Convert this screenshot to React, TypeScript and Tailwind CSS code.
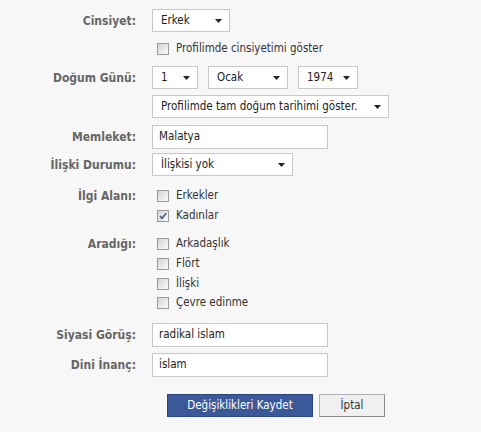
import React from "react";

function Arrow() {
  return (
    <svg width="7" height="4" viewBox="0 0 7 4" className="shrink-0">
      <polygon points="0,0 7,0 3.5,4" fill="#222" />
    </svg>
  );
}

function Select({ value, w }: { value: string; w: string }) {
  return (
    <div className={`flex h-[23px] items-center justify-between border border-[#c8c8c8] bg-white pl-[8px] pr-[7px] text-[#222] ${w}`}>
      <span>{value}</span>
      <Arrow />
    </div>
  );
}

function Input({ value }: { value: string }) {
  return (
    <div className="flex h-[24px] w-[176px] items-center border border-[#c8c8c8] bg-white px-[6px] text-[#222]">
      {value}
    </div>
  );
}

function Box({ checked }: { checked?: boolean }) {
  return (
    <span className="relative inline-block h-[12px] w-[12px] shrink-0 border border-[#9a9a9a] bg-linear-to-br from-[#d4d4d4] to-[#fbfbfb]">
      {checked && (
        <svg width="10" height="10" viewBox="0 0 10 10" className="absolute left-[0px] top-[0px]">
          <path d="M2 5 L4 7.5 L8.2 2.3" stroke="#4b5f8c" strokeWidth="1.7" fill="none" />
        </svg>
      )}
    </span>
  );
}

function Check({ label, checked, h = "h-[20px]" }: { label: string; checked?: boolean; h?: string }) {
  return (
    <div className={`flex items-center gap-[7px] pl-[5px] text-[#333] ${h}`}>
      <Box checked={checked} />
      <span>{label}</span>
    </div>
  );
}

function Row({ label, children, className = "" }: { label?: string; children: React.ReactNode; className?: string }) {
  return (
    <div className={`flex ${className}`}>
      <div className="mr-[16px] w-[136px] shrink-0 text-right text-[12px] font-bold text-[#666]">{label}</div>
      <div>{children}</div>
    </div>
  );
}

export default function App() {
  return (
    <div className="h-[432px] w-[481px] bg-[#f7f7f7] pt-[9px] font-['DejaVu_Sans_Condensed','Liberation_Sans',sans-serif] text-[11.5px]">
      <Row label="Cinsiyet:" className="h-[23px] items-center">
        <Select value="Erkek" w="w-[78px]" />
      </Row>
      <Row className="h-[34px] items-center">
        <Check label="Profilimde cinsiyetimi göster" />
      </Row>
      <Row label="Doğum Günü:" className="h-[23px] items-center">
        <div className="flex gap-[10px]">
          <Select value="1" w="w-[46px]" />
          <Select value="Ocak" w="w-[80px]" />
          <Select value="1974" w="w-[60px]" />
        </div>
      </Row>
      <Row className="mt-[6px] h-[23px] items-center">
        <Select value="Profilimde tam doğum tarihimi göster." w="w-[237px]" />
      </Row>
      <Row label="Memleket:" className="mt-[7px] h-[23px] items-center">
        <Input value="Malatya" />
      </Row>
      <Row label="İlişki Durumu:" className="mt-[5px] h-[23px] items-center">
        <Select value="İlişkisi yok" w="w-[141px]" />
      </Row>
      <div className="mt-[10px] flex">
        <div className="mr-[16px] flex h-[20px] w-[136px] shrink-0 items-center justify-end text-[12px] font-bold text-[#666]">İlgi Alanı:</div>
        <div>
          <Check label="Erkekler" />
          <Check label="Kadınlar" checked />
        </div>
      </div>
      <div className="mt-[8px] flex">
        <div className="mr-[16px] flex h-[20px] w-[136px] shrink-0 items-center justify-end text-[12px] font-bold text-[#666]">Aradığı:</div>
        <div>
          <Check label="Arkadaşlık" />
          <Check label="Flört" />
          <Check label="İlişki" h="h-[19px]" />
          <Check label="Çevre edinme" />
        </div>
      </div>
      <Row label="Siyasi Görüş:" className="mt-[10px] h-[24px] items-center">
        <Input value="radikal islam" />
      </Row>
      <Row label="Dini İnanç:" className="mt-[6px] h-[24px] items-center">
        <Input value="islam" />
      </Row>
      <div className="mt-[17px] flex gap-[6px] pl-[167px]">
        <div className="flex h-[23px] w-[146px] items-center justify-center border border-[#29447e] bg-[#3b5998] text-white">
          Değişiklikleri Kaydet
        </div>
        <div className="flex h-[23px] w-[66px] items-center justify-center border border-[#b4b4b4] border-b-[#8c8c8c] border-r-[#8c8c8c] bg-[#f0f0f0] text-[#333]">
          İptal
        </div>
      </div>
    </div>
  );
}
